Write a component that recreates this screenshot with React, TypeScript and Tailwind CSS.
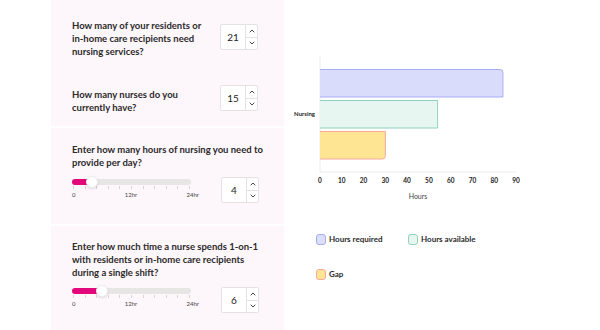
import { ChevronUp, ChevronDown } from "lucide-react";

const NumberBox = ({ value }: { value: number }) => (
  <div className="flex h-[26px] w-[38px] shrink-0 rounded-[2px] border border-[#e6e2e4] bg-white">
    <div className="flex flex-1 items-center justify-center text-[10px] text-[#222]">{value}</div>
    <div className="flex w-[12px] flex-col border-l border-[#e6e2e4]">
      <div className="flex flex-1 items-center justify-center border-b border-[#e6e2e4]">
        <ChevronUp size={8} strokeWidth={3} className="text-[#444]" />
      </div>
      <div className="flex flex-1 items-center justify-center">
        <ChevronDown size={8} strokeWidth={3} className="text-[#444]" />
      </div>
    </div>
  </div>
);

const Slider = ({ percent }: { percent: number }) => (
  <div className="w-[119px]">
    <div className="relative h-[6px] rounded-full bg-[#e8e5e5]">
      <div className="h-full rounded-full bg-[#e2087c]" style={{ width: `${percent}%` }} />
      <div
        className="absolute top-1/2 h-[12px] w-[12px] -translate-x-1/2 -translate-y-1/2 rounded-full border border-[#eee] bg-white shadow-sm"
        style={{ left: `${percent}%` }}
      />
    </div>
    <div className="mt-[1px] flex justify-between px-[1px]">
      {Array.from({ length: 11 }).map((_, i) => (
        <div key={i} className="h-[3px] w-px bg-[#d8d4d6]" />
      ))}
    </div>
    <div className="mt-[1px] flex justify-between text-[6px] text-[#444]">
      <span>0</span>
      <span>12hr</span>
      <span className="-mr-[8px]">24hr</span>
    </div>
  </div>
);

const Question = ({ children }: { children: React.ReactNode }) => (
  <p className="whitespace-nowrap text-[9.5px] font-bold leading-[13px] text-[#2a2a2a]">{children}</p>
);

const ticks = [0, 10, 20, 30, 40, 50, 60, 70, 80, 90];

const Chart = () => {
  const x0 = 35;
  const scale = 196 / 90;
  return (
    <svg width="315" height="210" viewBox="0 0 315 210" className="block">
      <line x1={x0} y1={56} x2={x0} y2={172} stroke="#ececec" strokeWidth="1" />
      <line x1={x0} y1={172} x2={x0 + 196} y2={172} stroke="#ececec" strokeWidth="1" />
      <path d={`M${x0} 69.5 H${x0 + 84 * scale - 3} a3 3 0 0 1 3 3 V97 H${x0}`} fill="#d9dcfb" stroke="#a7adf1" />
      <path d={`M${x0} 100.5 H${x0 + 54 * scale} V128 H${x0}`} fill="#e8f6f2" stroke="#8fd2bf" />
      <path d={`M${x0} 131.5 H${x0 + 30 * scale} V156 a3 3 0 0 1 -3 3 H${x0}`} fill="#fde594" stroke="#f7aa9c" />
      <text x={30} y={116} textAnchor="end" fontSize="6" fontWeight="700" fill="#222" fontFamily="Lato, sans-serif">
        Nursing
      </text>
      {ticks.map((t) => (
        <text
          key={t}
          x={x0 + t * scale}
          y={183}
          textAnchor="middle"
          fontSize="6.5"
          fontWeight="700"
          fill="#222"
          fontFamily="Lato, sans-serif"
        >
          {t}
        </text>
      ))}
      <text x={133} y={199} textAnchor="middle" fontSize="7" fill="#444" fontFamily="Lato, sans-serif">
        Hours
      </text>
    </svg>
  );
};

const LegendItem = ({ label, fill, border }: { label: string; fill: string; border: string }) => (
  <div className="flex items-center gap-[3px]">
    <div className={`h-[11px] w-[10px] rounded-[3px] border ${fill} ${border}`} />
    <span className="text-[8px] font-bold text-[#2a2a2a]">{label}</span>
  </div>
);

export default function App() {
  return (
    <div className="flex h-[330px] w-[600px] bg-white font-['Lato',sans-serif]">
      <div className="w-[51px] shrink-0" />
      <div className="flex w-[233px] shrink-0 flex-col gap-[2px] bg-white">
        <div className="h-[126px] bg-[#fdf6fa] pl-[21px] pr-[26px]">
          <div className="flex items-start justify-between pt-[19px]">
            <Question>
              How many of your residents or
              <br />
              in-home care recipients need
              <br />
              nursing services?
            </Question>
            <div className="pt-[5px]">
              <NumberBox value={21} />
            </div>
          </div>
          <div className="mt-[27px] flex items-start justify-between">
            <div className="pt-[3px]">
              <Question>
                How many nurses do you
                <br />
                currently have?
              </Question>
            </div>
            <NumberBox value={15} />
          </div>
        </div>
        <div className="h-[96px] bg-[#fdf6fa] pl-[21px] pr-[25px] pt-[15px]">
          <Question>
            Enter how many hours of nursing you need to
            <br />
            provide per day?
          </Question>
          <div className="mt-[8px] flex items-start justify-between">
            <div className="pt-[2px]">
              <Slider percent={17} />
            </div>
            <NumberBox value={4} />
          </div>
        </div>
        <div className="flex-1 bg-[#fdf6fa] pl-[21px] pr-[25px] pt-[14px]">
          <Question>
            Enter how much time a nurse spends 1-on-1
            <br />
            with residents or in-home care recipients
            <br />
            during a single shift?
          </Question>
          <div className="mt-[8px] flex items-start justify-between">
            <div className="pt-[1px]">
              <Slider percent={25} />
            </div>
            <NumberBox value={6} />
          </div>
        </div>
      </div>
      <div className="flex flex-1 flex-col pl-[1px]">
        <Chart />
        <div className="mt-[23px] grid w-[210px] grid-cols-[92px_1fr] gap-y-[23px] pl-[31px]">
          <LegendItem label="Hours required" fill="bg-[#dcdffc]" border="border-[#a7adf1]" />
          <LegendItem label="Hours available" fill="bg-[#e8f6f2]" border="border-[#8fd2bf]" />
          <LegendItem label="Gap" fill="bg-[#fde594]" border="border-[#f7aa9c]" />
        </div>
      </div>
    </div>
  );
}
